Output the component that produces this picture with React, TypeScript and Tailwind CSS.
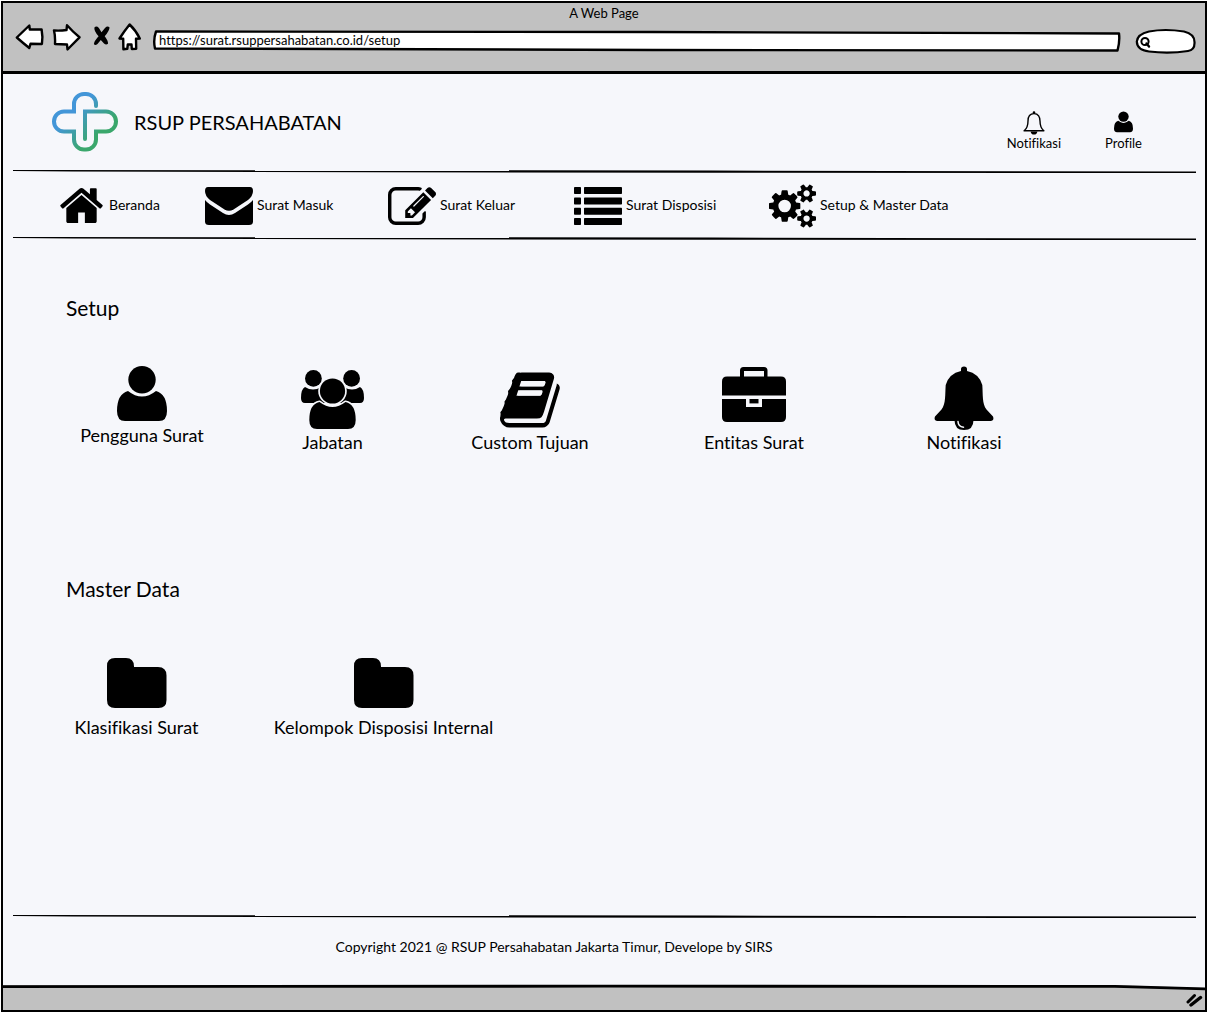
import type { ReactNode } from "react";

const INK = "#000000";
const PAPER = "#f6f7fb";

/* ---------- hand-drawn rules ---------- */

function Rule() {
  return (
    <svg className="mr-[9px] ml-2.5 block h-1 shrink-0" viewBox="0 0 1183 4" preserveAspectRatio="none" aria-hidden="true">
      <path d="M0 0 L30 0 L360 0.2 L700 0.6 L1183 1.6 L1183 3 L700 2.7 L360 2.2 L60 1.5 L0 1Z" fill={INK} />
    </svg>
  );
}

/* ---------- browser chrome icons ---------- */

function BackIcon() {
  return (
    <svg width="29" height="28" viewBox="0 0 29 28" fill="white" stroke={INK} strokeWidth="2.4" strokeLinejoin="round" aria-hidden="true">
      <path d="M1.8 14.5 L14.3 2.5 L14.8 6.5 L26.6 6.5 L27.4 14 L26.9 21 L15.5 20.8 L14.3 25 Q8 20 1.8 14.5Z" />
    </svg>
  );
}

function ForwardIcon() {
  return (
    <svg width="29" height="28" viewBox="0 0 29 28" fill="white" stroke={INK} strokeWidth="2.4" strokeLinejoin="round" aria-hidden="true">
      <path d="M2 7.5 Q8 8 14.5 7 L15 2.3 Q21 9 27.5 14.3 L15.5 26.5 L15 21.5 L3 21 Q3.4 13 2 7.5Z" />
    </svg>
  );
}

function StopIcon() {
  return (
    <svg width="17" height="28" viewBox="0 0 17 28" fill={INK} aria-hidden="true">
      <path d="M1.4 4.5 Q3.5 2.5 5.9 5 L8.5 9.2 L12 5 Q14.5 2.5 16.6 4.5 Q16.3 8 11.7 13.3 Q15.4 18 15 20.8 Q13 22.5 11 20.5 L7.8 17 L4.5 21 Q2 23 0.9 21 Q1.3 18 5.6 13.3 Q0.8 8 1.4 4.5Z" />
    </svg>
  );
}

function HomeArrowIcon() {
  return (
    <svg width="23" height="28" viewBox="0 0 23 28" fill="white" stroke={INK} strokeWidth="2.4" strokeLinejoin="round" aria-hidden="true">
      <path d="M11.6 1.5 Q6 8.5 1.5 15.5 L5.2 15.8 L5.4 26.3 L9.3 25.8 L9.8 21.5 L13.5 21.5 L13.8 26 L18.2 25.8 L18 15.8 L21.8 15.5 Q17.5 7 11.6 1.5Z" />
    </svg>
  );
}

/* ---------- site icons ---------- */

function Logo() {
  return (
    <svg width="66" height="60" viewBox="0 0 66 60" fill="none" aria-hidden="true">
      <defs>
        <linearGradient id="logo-tone" gradientUnits="userSpaceOnUse" x1="16" y1="12" x2="50" y2="48">
          <stop offset="0.2" stopColor="#4396d8" />
          <stop offset="0.85" stopColor="#3aa76c" />
        </linearGradient>
      </defs>
      <path
        d="M44 14 V12 A10 10 0 0 0 34 2 H32 A10 10 0 0 0 22 12 V19.5 H12 A10 10 0 0 0 2 29.5 A10 10 0 0 0 12 39.5 H22 V47.5 A10 10 0 0 0 32 57.5 H34 A10 10 0 0 0 44 47.5 V39.5 H54 A10 10 0 0 0 64 29.5 A10 10 0 0 0 54 19.5 H33 V47"
        stroke="url(#logo-tone)"
        strokeWidth="4"
        strokeLinecap="round"
      />
    </svg>
  );
}

function BellOutlineIcon() {
  return (
    <svg width="22" height="24" viewBox="0 0 22 24" aria-hidden="true">
      <path d="M11 2.6 C6.6 2.6 5 6 5 10 C5 15.2 3.4 18 1.1 19.8 H20.9 C18.6 18 17 15.2 17 10 C17 6 15.4 2.6 11 2.6Z" fill="none" stroke={INK} strokeWidth="1.4" strokeLinejoin="round" />
      <circle cx="11" cy="1.6" r="1.3" fill={INK} />
      <path d="M7.6 20.5 H14.4 Q14 23.6 11 23.6 Q8 23.6 7.6 20.5Z" fill={INK} />
    </svg>
  );
}

function PersonShape() {
  return (
    <>
      <path d="M11 25 Q0 28 0 45 Q0 55 8 55 H42 Q50 55 50 45 Q50 28 39 25 Q25 36 11 25Z" fill={INK} />
      <circle cx="25" cy="13.8" r="15.4" fill={PAPER} />
      <circle cx="25" cy="13.8" r="13.7" fill={INK} />
    </>
  );
}

function ProfileIcon() {
  return (
    <svg width="19" height="22" viewBox="0 0 50 56" aria-hidden="true">
      <PersonShape />
    </svg>
  );
}

function HouseIcon() {
  return (
    <svg width="43" height="35" viewBox="80 250 1632 1290" preserveAspectRatio="none" fill={INK} aria-hidden="true">
      <path d="M1472 992v480q0 26-19 45t-45 19h-384v-384h-256v384h-384q-26 0-45-19t-19-45v-480q0-1 .5-3t.5-3l575-474 575 474q1 2 1 6zm223-69l-62 74q-8 9-21 11h-3q-13 0-21-7l-692-577-692 577q-12 8-24 7-13-2-21-11l-62-74q-8-10-7-23.5t11-21.5l719-599q32-26 76-26t76 26l244 204v-195q0-14 9-23t23-9h192q14 0 23 9t9 23v408l219 182q10 8 11 21.5t-7 23.5z" />
    </svg>
  );
}

function EnvelopeIcon() {
  return (
    <svg width="48" height="38" viewBox="0 0 48 38" fill={INK} aria-hidden="true">
      <path d="M3 0 H45 Q48 0 48 4 Q48 9 43 13 L28.5 22.4 Q24 25 19.5 22.4 L5 13 Q0 9 0 4 Q0 0 3 0Z" />
      <path d="M0 13 Q2 15.5 5 17.5 L18 26 Q24 29.8 30 26 L43 17.5 Q46 15.5 48 13 V34.5 Q48 38 44 38 H4 Q0 38 0 34.5Z" />
    </svg>
  );
}

function PencilSquareIcon() {
  return (
    <svg width="48" height="38" viewBox="0 128 1784 1408" fill={INK} aria-hidden="true">
      <path d="M888 1184l116-116-152-152-116 116v56h96v96h56zm440-720q-16-16-33 1l-350 350q-17 17-1 33t33-1l350-350q17-17 1-33zm80 594v190q0 119-84.5 203.5t-203.5 84.5h-832q-119 0-203.5-84.5t-84.5-203.5v-832q0-119 84.5-203.5t203.5-84.5h832q63 0 117 25 15 7 18 23 3 17-9 29l-49 49q-14 14-32 8-23-6-45-6h-832q-66 0-113 47t-47 113v832q0 66 47 113t113 47h832q66 0 113-47t47-113v-126q0-13 9-22l64-64q15-15 35-7t20 29zm-96-738l288 288-672 672h-288v-288zm444 132l-92 92-288-288 92-92q28-28 68-28t68 28l152 152q28 28 28 68t-28 68z" />
    </svg>
  );
}

function ListIcon() {
  return (
    <svg width="48" height="38" viewBox="0 0 48 38" fill={INK} aria-hidden="true">
      {[0, 10.6, 20.8, 31].map((y) => (
        <g key={y}>
          <rect x="0" y={y} width="7" height="7" rx="0.8" />
          <rect x="10" y={y} width="38" height="7" rx="0.8" />
        </g>
      ))}
    </svg>
  );
}

function CogsIcon() {
  return (
    <svg width="47" height="44" viewBox="0 0 1920 1792" fill={INK} aria-hidden="true">
      <path d="M896 896q0-106-75-181t-181-75-181 75-75 181 75 181 181 75 181-75 75-181zm768 512q0-52-38-90t-90-38-90 38-38 90q0 53 37.5 90.5t90.5 37.5 90.5-37.5 37.5-90.5zm0-1024q0-52-38-90t-90-38-90 38-38 90q0 53 37.5 90.5t90.5 37.5 90.5-37.5 37.5-90.5zm-384 421v185q0 10-7 19.5t-16 10.5l-155 24q-11 35-32 76 34 48 90 115 7 11 7 20 0 12-7 19-23 30-82.5 89.5t-78.5 59.5q-11 0-21-7l-115-90q-37 19-77 31-11 108-23 155-7 24-30 24h-186q-11 0-20-7.5t-10-17.5l-23-153q-34-10-75-31l-118 89q-7 7-20 7-11 0-21-8-144-133-144-160 0-9 7-19 10-14 41-53t47-61q-23-44-35-82l-152-24q-10-1-17-9.5t-7-19.5v-185q0-10 7-19.5t16-10.5l155-24q11-35 32-76-34-48-90-115-7-11-7-20 0-12 7-20 22-30 82-89t79-59q11 0 21 7l115 90q34-18 77-32 11-108 23-154 7-24 30-24h186q11 0 20 7.5t10 17.5l23 153q34 10 75 31l118-89q8-7 20-7 11 0 21 8 144 133 144 160 0 8-7 19-12 16-42 54t-45 60q23 48 34 82l152 23q10 2 17 10.5t7 19.5zm640 533v140q0 16-149 31-12 27-30 52 51 113 51 138 0 4-4 7-122 71-124 71-8 0-46-47t-52-68q-20 2-30 2t-30-2q-14 21-52 68t-46 47q-2 0-124-71-4-3-4-7 0-25 51-138-18-25-30-52-149-15-149-31v-140q0-16 149-31 13-29 30-52-51-113-51-138 0-4 4-7 4-2 35-20t59-34 30-16q8 0 46 46.5t52 67.5q20-2 30-2t30 2q51-71 92-112l6-2q4 0 124 70 4 3 4 7 0 25-51 138 17 23 30 52 149 15 149 31zm0-1024v140q0 16-149 31-12 27-30 52 51 113 51 138 0 4-4 7-122 71-124 71-8 0-46-47t-52-68q-20 2-30 2t-30-2q-14 21-52 68t-46 47q-2 0-124-71-4-3-4-7 0-25 51-138-18-25-30-52-149-15-149-31v-140q0-16 149-31 13-29 30-52-51-113-51-138 0-4 4-7 4-2 35-20t59-34 30-16q8 0 46 46.5t52 67.5q20-2 30-2t30 2q51-71 92-112l6-2q4 0 124 70 4 3 4 7 0 25-51 138 17 23 30 52 149 15 149 31z" />
    </svg>
  );
}

function UserIcon() {
  return (
    <svg width="50" height="57" viewBox="0 0 50 57" aria-hidden="true">
      <PersonShape />
    </svg>
  );
}

function GroupIcon() {
  return (
    <svg width="64" height="64" viewBox="0 -4 64 64" aria-hidden="true">
      <path d="M4 17 Q0 19 0 28 Q0 33 4 33 H26 V17 H20 Q12 22 4 17Z" fill={INK} />
      <path d="M59 17 Q63 19 63 28 Q63 33 59 33 H37 V17 H43 Q51 22 59 17Z" fill={INK} />
      <circle cx="12.4" cy="8.4" r="9.8" fill={PAPER} />
      <circle cx="50.6" cy="8.4" r="9.8" fill={PAPER} />
      <circle cx="12.4" cy="8.4" r="8.4" fill={INK} />
      <circle cx="50.6" cy="8.4" r="8.4" fill={INK} />
      <path d="M18.5 32 Q8.3 34 8.3 50 Q8.3 59 16 59 H47 Q54.7 59 54.7 50 Q54.7 34 44.5 32 Q31.5 42 18.5 32Z" fill={INK} stroke={PAPER} strokeWidth="3" paintOrder="stroke" />
      <circle cx="31.5" cy="21" r="14.3" fill={PAPER} />
      <circle cx="31.5" cy="21" r="12.6" fill={INK} />
    </svg>
  );
}

function BookIcon() {
  return (
    <svg width="60" height="64" viewBox="0 -50 1670 1781" fill={INK} aria-hidden="true">
      <path d="M1639 478q40 57 18 129l-275 906q-19 64-76.5 107.5t-122.5 43.5h-923q-77 0-148.5-53.5t-99.5-131.5q-24-67-2-127 0-4 3-27t4-37q1-8-3-21.5t-3-19.5q2-11 8-21t16.5-23.5 16.5-23.5q23-38 45-91.5t30-91.5q3-10 .5-30t-.5-28q3-11 17-28t17-23q21-36 42-92t25-90q1-9-2.5-32t.5-28q4-13 22-30.5t22-22.5q19-26 42.5-84.5t27.5-96.5q1-8-3-25.5t-2-26.5q2-8 9-18t18-23 17-21q8-12 16.5-30.5t15-35 16-36 19.5-32 26.5-23.5 36-11.5 47.5 5.5l-1 3q38-9 51-9h761q74 0 114 56t18 130l-274 906q-36 119-71.5 153.5t-128.5 34.5h-869q-27 0-38 15-11 16-1 43 24 70 144 70h923q29 0 56-15.5t35-41.5l300-987q7-22 5-57 38 15 59 43zm-1064 2q-4 13 2 22.5t20 9.5h608q13 0 25.5-9.5t16.5-22.5l21-64q4-13-2-22.5t-20-9.5h-608q-13 0-25.5 9.5t-16.5 22.5zm-83 256q-4 13 2 22.5t20 9.5h608q13 0 25.5-9.5t16.5-22.5l21-64q4-13-2-22.5t-20-9.5h-608q-13 0-25.5 9.5t-16.5 22.5z" />
      <path d="M590 370 H1262 L1210 520 H540Z M508 626 H1180 L1128 776 H458Z" fill={PAPER} />
    </svg>
  );
}

function BriefcaseIcon() {
  return (
    <svg width="64" height="64" viewBox="0 -1 64 64" fill={INK} aria-hidden="true">
      <path d="M18 10 V3.5 Q18 0 21.5 0 H42 Q45.5 0 45.5 3.5 V10 H42 V4 H22 V10Z" />
      <path d="M5 9.5 H59 Q64 9.5 64 14.5 V28.5 H0 V14.5 Q0 9.5 5 9.5Z" />
      <path d="M0 32 H24 V40 H40 V32 H64 V50 Q64 55 59 55 H5 Q0 55 0 50Z" />
      <rect x="27.5" y="32" width="9" height="4.4" />
    </svg>
  );
}

function BellIcon() {
  return (
    <svg width="60" height="64" viewBox="0 0 60 64" fill={INK} aria-hidden="true">
      <path d="M27 5 V3 Q27 0.5 30 0.5 Q33 0.5 33 3 V5 Q45 7.5 48.3 19 C49 28 48 38 52.5 43.5 L59 50.5 Q60.5 54.5 56.5 55 H3.5 Q-0.5 54.5 1 50.5 L7.5 43.5 C12 38 11 28 11.7 19 Q15 7.5 27 5Z" />
      <path d="M20.5 54 H39.5 Q39.5 64 30 64 Q20.5 64 20.5 54Z" />
      <path d="M24 55.5 Q24.2 60.5 29.5 61.2" fill="none" stroke={PAPER} strokeWidth="1.5" strokeLinecap="round" />
    </svg>
  );
}

function FolderIcon() {
  return (
    <svg width="60" height="58" viewBox="0 0 60 58" fill={INK} aria-hidden="true">
      <path d="M8 1 H19 Q27 1 27 9.5 V10 H51 Q59.5 10 59.5 18.5 V43 Q59.5 51 51.5 51 H8 Q0 51 0 43 V9 Q0 1 8 1Z" />
    </svg>
  );
}

/* ---------- pieces ---------- */

function NavItem({ icon, label, wide }: { icon: ReactNode; label: string; wide?: boolean }) {
  return (
    <a href="#" className={wide ? "flex items-center gap-1.5 whitespace-nowrap" : "flex items-center gap-1 whitespace-nowrap"}>
      {icon}
      <span className="pb-0.5">{label}</span>
    </a>
  );
}

function Tile({ icon, label }: { icon: ReactNode; label: string }) {
  return (
    <a href="#" className="flex flex-col items-center text-lg leading-6 whitespace-nowrap">
      {icon}
      <span>{label}</span>
    </a>
  );
}

export default function App() {
  return (
    <div className="bg-white p-px font-['Lato',sans-serif] text-sm text-black [font-variant-ligatures:none]">
      <div className="flex min-h-[calc(100vh-2px)] flex-col border-2 border-black bg-[#f6f7fb]">
        <header className="border-b-[3px] border-black bg-[#c1c1c1] pb-[17px]">
          <p className="text-center text-[13px] leading-5">A Web Page</p>
          <div className="flex items-start pr-[9px] pl-3">
            <button type="button" aria-label="Back"><BackIcon /></button>
            <button type="button" aria-label="Forward" className="ml-2"><ForwardIcon /></button>
            <button type="button" aria-label="Stop" className="ml-3"><StopIcon /></button>
            <button type="button" aria-label="Home" className="ml-2"><HomeArrowIcon /></button>
            <div className="relative mt-[7px] ml-3 h-[22px] flex-1">
              <svg className="absolute inset-0 h-full w-full" viewBox="0 0 968 22" preserveAspectRatio="none" aria-hidden="true">
                <path d="M3 1.5 L500 2 L966 3.5 Q967 12 964.5 20.5 L500 20 L2 18.5 Q0 10 3 1.5Z" fill="white" stroke={INK} strokeWidth="2.4" strokeLinejoin="round" />
              </svg>
              <input
                aria-label="Address"
                defaultValue="https://surat.rsuppersahabatan.co.id/setup"
                className="relative block h-5 w-full bg-transparent pl-1.5 text-[13px] outline-none [font-variant-ligatures:none]"
              />
            </div>
            <div className="relative mt-[5px] ml-3.5 h-[26px] w-[61px]">
              <svg className="absolute inset-0 h-full w-full" viewBox="0 0 61 26" aria-hidden="true">
                <path d="M14 3.5 Q30 0.5 49 3.5 Q59.5 6 59.5 14 Q60 22 53 23 Q34 26 14 23.5 Q2 22 1.8 13.5 Q2.5 6 14 3.5Z" fill="white" stroke={INK} strokeWidth="2.2" />
                <circle cx="10" cy="13.5" r="3.6" fill="none" stroke={INK} strokeWidth="2" />
                <path d="M11.5 15.5 L14 18.5" stroke={INK} strokeWidth="2.4" strokeLinecap="round" />
              </svg>
              <input aria-label="Search" className="relative block h-6 w-full bg-transparent pr-2 pl-5 text-[13px] outline-none" />
            </div>
          </div>
        </header>

        <div className="flex h-24 shrink-0 items-center pr-[63px] pl-[49px]">
          <Logo />
          <h1 className="ml-4 text-xl">RSUP PERSAHABATAN</h1>
          <a href="#" className="mt-[18px] ml-auto flex flex-col items-center text-[13px] leading-4">
            <BellOutlineIcon />
            Notifikasi
          </a>
          <a href="#" className="mt-[18px] ml-11 flex flex-col items-center gap-0.5 text-[13px] leading-4">
            <ProfileIcon />
            Profile
          </a>
        </div>

        <Rule />
        <nav className="grid h-[63px] shrink-0 grid-cols-[145fr_183fr_186fr_195fr_436fr] items-center pl-[57px]">
          <NavItem icon={<HouseIcon />} label="Beranda" wide />
          <NavItem icon={<EnvelopeIcon />} label="Surat Masuk" />
          <NavItem icon={<PencilSquareIcon />} label="Surat Keluar" />
          <NavItem icon={<ListIcon />} label="Surat Disposisi" />
          <NavItem icon={<CogsIcon />} label="Setup & Master Data" />
        </nav>
        <Rule />

        <main className="grow">
          <section className="pt-[55px]">
            <h2 className="pl-[63px] text-[21px] leading-6">Setup</h2>
            <div className="mt-[46px] grid grid-cols-[190fr_191fr_204fr_244fr_176fr_153fr] pl-11">
              <Tile icon={<UserIcon />} label="Pengguna Surat" />
              <Tile icon={<GroupIcon />} label="Jabatan" />
              <Tile icon={<BookIcon />} label="Custom Tujuan" />
              <Tile icon={<BriefcaseIcon />} label="Entitas Surat" />
              <Tile icon={<BellIcon />} label="Notifikasi" />
            </div>
          </section>
          <section className="pt-[123px]">
            <h2 className="pl-[63px] text-[21px] leading-6">Master Data</h2>
            <div className="mt-14 grid grid-cols-[179fr_315fr_664fr] pl-11">
              <Tile icon={<FolderIcon />} label="Klasifikasi Surat" />
              <Tile icon={<FolderIcon />} label="Kelompok Disposisi Internal" />
            </div>
          </section>
        </main>

        <Rule />
        <footer className="shrink-0">
          <p className="pt-[18px] pr-[100px] pb-[27px] text-center leading-5">
            Copyright 2021 @ RSUP Persahabatan Jakarta Timur, Develope by SIRS
          </p>
          <div className="relative flex h-[26px] items-center justify-end bg-[#c1c1c1] pt-1.5 pr-0.5">
            <svg className="absolute inset-x-0 top-0 h-2 w-full" viewBox="0 0 1200 8" preserveAspectRatio="none" aria-hidden="true">
              <path d="M0 0 H1200 V4 L1110 1 L0 1Z" fill={PAPER} />
              <path d="M0 1.2 L600 0.8 L1110 1 L1200 3.5 V6.2 L1110 3.7 L600 3.6 L0 4Z" fill={INK} />
            </svg>
            <svg width="17" height="14" viewBox="0 0 17 14" fill="none" stroke={INK} strokeLinecap="round" aria-hidden="true">
              <path d="M2 9 L8.5 2.5" strokeWidth="3" />
              <path d="M5 12 L14.5 4.5" strokeWidth="3.4" />
            </svg>
          </div>
        </footer>
      </div>
    </div>
  );
}
